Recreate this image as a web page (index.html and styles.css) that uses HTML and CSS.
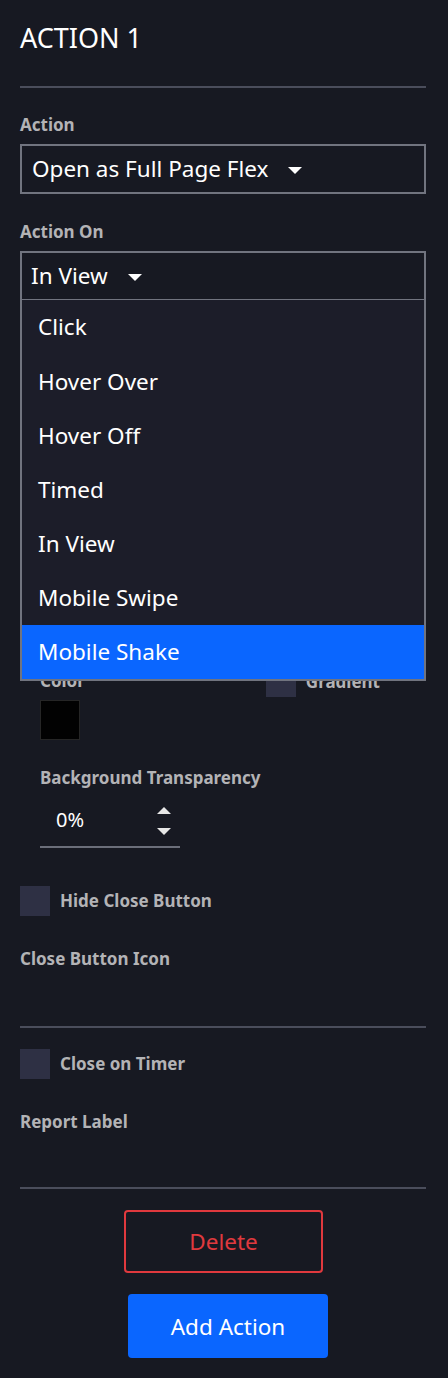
FILE: index.html
```html
<!DOCTYPE html>
<html lang="en">
<head>
  <meta charset="UTF-8" />
  <meta name="viewport" content="width=device-width, initial-scale=1.0"/>
  <title>Action 1</title>
  <link rel="stylesheet" href="styles.css">
</head>
<body>
<div id="panel">
  <h1 class="title">ACTION 1</h1>
  <hr class="rule">

  <label class="field-label">Action</label>
  <div class="select">
    <span>Open as Full Page Flex</span><span class="caret"></span>
  </div>

  <label class="field-label on-label">Action On</label>
  <div class="select-wrap">
    <div class="select">
      <span>In View</span><span class="caret"></span>
    </div>
    <ul class="dropdown">
      <li>Click</li>
      <li>Hover Over</li>
      <li>Hover Off</li>
      <li>Timed</li>
      <li>In View</li>
      <li>Mobile Swipe</li>
      <li class="active">Mobile Shake</li>
    </ul>
  </div>

  <div class="sub">
    <div class="color-row">
      <div>
        <label class="field-label">Color</label>
        <div class="swatch"></div>
      </div>
      <div class="check gradient">
        <span class="box"></span><span class="field-label">Gradient</span>
      </div>
    </div>

    <label class="field-label trans-label">Background Transparency</label>
    <div class="number">
      <span>0%</span>
      <span class="spin"><span class="up"></span><span class="down"></span></span>
    </div>
  </div>

  <div class="check hide-close">
    <span class="box"></span><span class="field-label">Hide Close Button</span>
  </div>
  <label class="field-label icon-label">Close Button Icon</label>
  <hr class="rule rule-icon">

  <div class="check timer">
    <span class="box"></span><span class="field-label">Close on Timer</span>
  </div>
  <label class="field-label report-label">Report Label</label>
  <hr class="rule rule-report">

  <div class="buttons">
    <button class="btn-delete">Delete</button>
    <button class="btn-add">Add Action</button>
  </div>
</div>
</body>
</html>
```

FILE: styles.css
```css
body {
  font-family: "Noto Sans", "Open Sans", sans-serif;
  background-color: #171922;
  color: white;
  margin: 0;
}

#panel {
  width: 406px;
  padding: 22px 22px 0 20px;
  height: 1356px;
}

.title {
  font-size: 27px;
  font-weight: 400;
  line-height: 32px;
  margin: 0;
}

.rule {
  border: none;
  height: 2px;
  background-color: #4a4d5b;
  margin: 32px 0 0 0;
}

.field-label {
  display: block;
  font-size: 17px;
  font-weight: 700;
  line-height: 22px;
  color: #b3b3b6;
  margin-top: 26px;
}

.on-label {
  margin-top: 27px;
}

.select {
  box-sizing: border-box;
  height: 50px;
  margin-top: 8px;
  border: 2px solid #71747f;
  padding: 0 10px;
  font-size: 22.5px;
  line-height: 44px;
  display: flex;
  align-items: center;
}

.caret {
  width: 0;
  height: 0;
  border-left: 7px solid transparent;
  border-right: 7px solid transparent;
  border-top: 7px solid white;
  margin-left: 20px;
  margin-top: 2px;
}

.select-wrap {
  position: relative;
}

.select-wrap .select {
  padding-left: 9px;
}

.dropdown {
  position: absolute;
  top: 49px;
  left: 0;
  right: 0;
  margin: 0;
  padding: 0;
  list-style: none;
  background-color: #1c1d29;
  border: 2px solid #71747f;
  border-top: none;
  z-index: 5;
}

.dropdown li {
  height: 54px;
  line-height: 54px;
  padding-left: 16px;
  font-size: 22.5px;
}

.dropdown li:first-child {
  height: 55px;
}

.dropdown li.active {
  background-color: #0a66ff;
}

.sub {
  padding-left: 20px;
  margin-top: 369px;
}

.color-row {
  display: flex;
}

.color-row .field-label {
  margin-top: 0;
}

.swatch {
  width: 38px;
  height: 38px;
  background-color: #020202;
  border: 1px solid #262626;
  margin-top: 8px;
}

.check {
  display: flex;
  align-items: center;
}

.check .field-label {
  margin-top: 0;
  margin-left: 10px;
}

.box {
  width: 30px;
  height: 30px;
  background-color: #2e3044;
}

.gradient {
  margin-left: 181px;
  margin-top: -3px;
  align-self: flex-start;
}

.trans-label {
  margin-top: 27px;
}

.number {
  width: 140px;
  box-sizing: border-box;
  height: 46px;
  margin-top: 13px;
  border-bottom: 2px solid #6b6e7a;
  display: flex;
  align-items: center;
  justify-content: space-between;
  padding: 0 9px 9px 16px;
  font-size: 20px;
}

.spin {
  display: flex;
  flex-direction: column;
  gap: 14px;
  margin-top: 2px;
}

.up, .down {
  width: 0;
  height: 0;
  border-left: 7px solid transparent;
  border-right: 7px solid transparent;
}

.up {
  border-bottom: 7px solid #e6e6e6;
}

.down {
  border-top: 7px solid #e6e6e6;
}

.hide-close {
  margin-top: 38px;
}

.icon-label {
  margin-top: 32px;
}

.rule-icon {
  margin-top: 56px;
}

.timer {
  margin-top: 21px;
}

.report-label {
  margin-top: 32px;
}

.rule-report {
  margin-top: 54px;
}

.buttons {
  display: flex;
  flex-direction: column;
  margin-top: 21px;
}

button {
  font-family: "Noto Sans", "Open Sans", sans-serif;
  font-size: 22.5px;
  width: 200px;
  height: 64px;
  border-radius: 4px;
  cursor: pointer;
}

.btn-delete {
  background-color: transparent;
  color: #e0393e;
  border: 2px solid #e0393e;
  margin-left: 104px;
  width: 199px;
  height: 63px;
}

.btn-add {
  background-color: #0a66ff;
  color: white;
  border: none;
  margin-left: 108px;
  margin-top: 21px;
}
```
